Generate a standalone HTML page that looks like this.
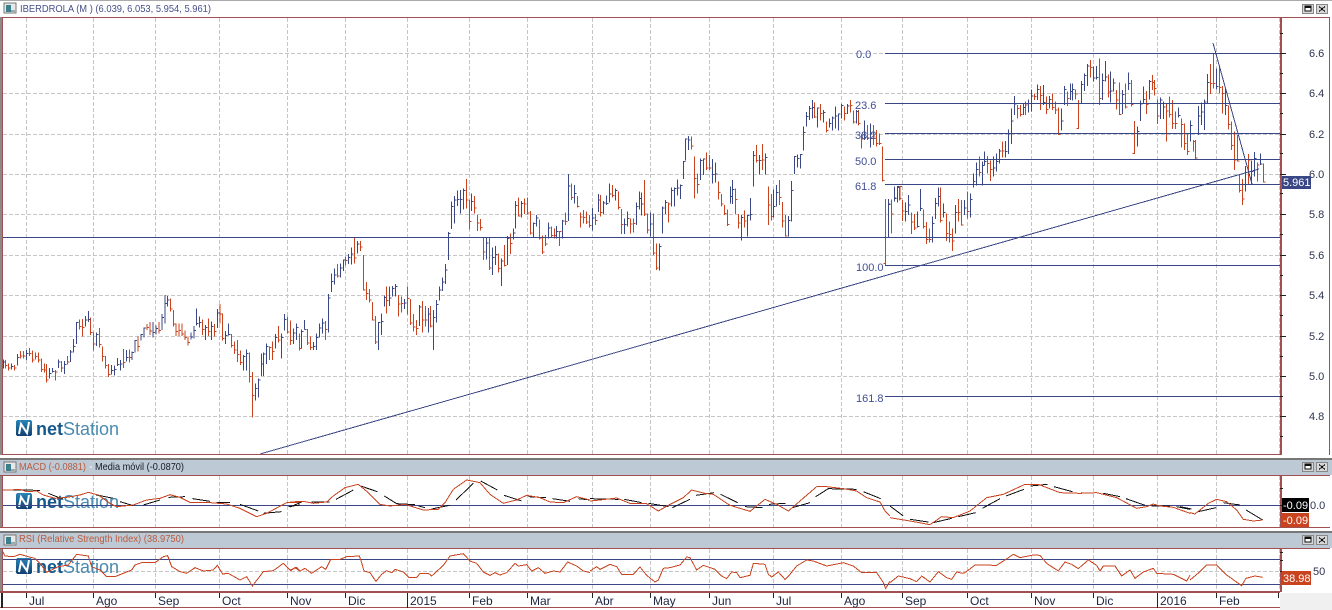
<!DOCTYPE html>
<html><head><meta charset="utf-8"><title>IBERDROLA</title>
<style>
html,body{margin:0;padding:0;background:#fff;width:1332px;height:610px;overflow:hidden}
svg{display:block;font-family:"Liberation Sans",Arial,sans-serif;shape-rendering:crispEdges}
.o{fill:none;stroke:#c8431e;stroke-width:3}
.b{fill:none;stroke:#3a4787;stroke-width:3}
.k{fill:none;stroke:#111;stroke-width:3}
.ax{font-size:11px;fill:#2c3350}
.fib{font-size:11px;fill:#414f96}
.dt{font-size:12px;fill:#1d2540}
.nl{font-size:18px;fill:#15598c;font-weight:bold}
.ns{font-size:18px;fill:#4a8ab0}
</style></head><body>
<svg width="1332" height="610" viewBox="0 0 1332 610" xmlns="http://www.w3.org/2000/svg">
<defs>
<linearGradient id="lg" x1="0" y1="0" x2="0" y2="1"><stop offset="0" stop-color="#2a86b8"/><stop offset="1" stop-color="#123f70"/></linearGradient>
<g id="wm"><rect x="16" y="0" width="16" height="16" rx="2" fill="url(#lg)"/><polyline points="19,14 21,4 27,13 29,2" fill="none" stroke="#fff" stroke-width="2" style="shape-rendering:auto"/><text class="nl" x="36" y="15">net</text><text class="ns" x="63" y="15">Station</text></g>
<g id="ic"><rect x="4" y="0" width="12" height="10" fill="#e8e8e8" stroke="#777"/><rect x="6" y="2" width="5" height="7" fill="#3c7f8c"/><rect x="11" y="7" width="4" height="2" fill="#9aa"/></g>
<g id="bt"><rect x="1302.5" y="0.5" width="11" height="9" fill="#d8d8d8" stroke="#888"/><rect x="1305" y="2" width="6" height="5" fill="#fff" stroke="#111"/><rect x="1305" y="2" width="6" height="2" fill="#111"/><rect x="1316.5" y="0.5" width="11" height="9" fill="#d8d8d8" stroke="#888"/><path d="M1319 2.5l6 5M1325 2.5l-6 5" stroke="#111" fill="none"/></g>
</defs>

<!-- frames -->
<rect width="1332" height="610" fill="#fff"/>
<rect x="0" y="0" width="1332" height="1" fill="#aaa"/>
<rect x="1280" y="593" width="52" height="17" fill="#f0f0f0"/>

<!-- grid -->
<g stroke="#c6c6c6" stroke-dasharray="4 2" fill="none">
<path d="M3 53.5H1279M3 93.5H1279M3 134.5H1279M3 174.5H1279M3 214.5H1279M3 255.5H1279M3 295.5H1279M3 336.5H1279M3 376.5H1279M3 416.5H1279M3 571.5H1279"/>
<path d="M26.5 18V454M93.5 18V454M155.5 18V454M219.5 18V454M287.5 18V454M345.5 18V454M407.5 18V454M469.5 18V454M527.5 18V454M592.5 18V454M650.5 18V454M709.5 18V454M773.5 18V454M841.5 18V454M902.5 18V454M967.5 18V454M1031.5 18V454M1093.5 18V454M1157.5 18V454M1216.5 18V454M1279.5 18V454"/>
<path d="M26.5 476V527M93.5 476V527M155.5 476V527M219.5 476V527M287.5 476V527M345.5 476V527M407.5 476V527M469.5 476V527M527.5 476V527M592.5 476V527M650.5 476V527M709.5 476V527M773.5 476V527M841.5 476V527M902.5 476V527M967.5 476V527M1031.5 476V527M1093.5 476V527M1157.5 476V527M1216.5 476V527M1279.5 476V527"/>
<path d="M26.5 549V591M93.5 549V591M155.5 549V591M219.5 549V591M287.5 549V591M345.5 549V591M407.5 549V591M469.5 549V591M527.5 549V591M592.5 549V591M650.5 549V591M709.5 549V591M773.5 549V591M841.5 549V591M902.5 549V591M967.5 549V591M1031.5 549V591M1093.5 549V591M1157.5 549V591M1216.5 549V591M1279.5 549V591"/>
</g>

<!-- watermarks -->
<use href="#wm" y="420"/>
<use href="#wm" y="493"/>
<use href="#wm" y="558"/>

<!-- price bars -->
<g transform="translate(0 300) scale(.33333)">
<path class="o" d="M16 180V205m0-8h6M25 190V212m0-8h6M43 195V212m0-8h6M61 153V176m0-8h6M70 153V176m0-8h6M88 144V168m0-8h6M97 152V188m0-8h6M106 158V178m0-8h6M115 158V188m0-8h6M124 176V216m0-8h6M133 190V218m0-8h6M140 192V248m0-8h6M167 210V242m0-26h6M185 183V216m0-12h6M203 168V194m0-8h6M239 58V88m0-8h6M248 57V110m0-28h6M272 52V105m0-8h6M281 98V152m0-20h6M299 84V142m0-8h6M308 140V185m0-16h6M317 168V205m0-8h6M326 192V231m0-8h6M371 147V204m0-16h6M389 148V188m0-16h6M414 110V155m0-16h6M441 72V90m0-8h6M450 66V105m0-12h6M477 66V100m0-8h6M511 -5V35m0-8h6M520 30V80m0-8h6M528 70V108m0-14h6M537 70V108m0-16h6M546 70V108m0-6h6M555 92V120m0-8h6M564 110V136m0-8h6M608 58V105m0-16h6M626 55V108m0-14h6M644 72V110m0-16h6M660 12V70m0-28h6M668 40V122m0-6h6M695 102V143m0-6h6M704 125V162m0-12h6M713 120V186m0-22h6M722 152V195m0-8h6M749 158V248m0-18h6M758 216V352m0-66h6M809 140V180m0-38h6M818 125V180m0-26h6M836 78V128m0-8h6M863 50V100m0-4h6M872 62V135m0-14h6M898 100V152m0-6h6"/>
<path class="b" d="M10 205V178m0 8h6M34 208V190m0 10h6M52 196V162m0 10h6M79 180V150m0 10h6M149 236V204m0 16h6M158 218V204m0 10h6M176 204V178m0 8h6M194 222V183m0 10h6M212 186V150m0 6h6M221 158V117m0 22h6M230 132V66m0 2h6M256 80V48m0 12h6M265 66V33m0 26h6M290 138V98m0 6h6M335 224V195m0 16h6M344 227V197m0 12h6M353 198V174m0 20h6M362 211V180m0 12h6M380 184V150m0 22h6M396 180V155m0 2h6M405 157V120m0 2h6M423 122V102m0 2h6M432 112V82m0 2h6M459 113V66m0 32h6M468 103V77m0 8h6M486 90V42m0 10h6M495 70V-15m0 25h6M503 20V-12m0 12h6M573 118V97m0 14h6M582 116V78m0 14h6M590 76V25m0 46h6M599 82V50m0 18h6M617 120V75m0 8h6M635 120V64m0 16h6M652 84V27m0 12h6M677 132V93m0 14h6M686 106V70m0 33h6M731 212V165m0 4h6M740 212V148m0 12h6M767 302V250m0 16h6M776 292V236m0 4h6M785 228V160m0 32h6M791 228V158m0 4h6M800 192V130m0 10h6M827 145V102m0 10h6M845 176V100m0 12h6M854 92V42m0 16h6M881 132V85m0 14h6M890 120V70m0 12h6"/>
</g>
<g transform="translate(300 170) scale(.33333)">
<path class="o" d="M22 477V525m0-6h6M31 500V540m0-8h6M76 453V510m0-32h6M112 282V322m0-4h6M137 260V286m0-14h6M163 203V280m0-16h6M181 213V243m0-12h6M190 255V362m0-2h6M199 336V390m0-20h6M208 357V398m0-8h6M217 396V452m0-2h6M226 438V522m0-6h6M259 350V430m0-38h6M295 375V440m0-38h6M304 380V427m0-26h6M322 350V434m0-48h6M331 387V465m0-6h6M340 432V485m0-14h6M349 450V495m0-20h6M367 393V488m0-38h6M376 408V470m0-20h6M391 408V472m0-4h6M499 27V115m0-25h6M508 90V178m0-24h6M524 78V130m0-16h6M533 135V183m0-24h6M542 147V182m0-10h6M551 203V270m0-24h6M569 203V300m0-6h6M596 250V308m0-12h6M614 225V290m0-4h6M632 190V252m0-32h6M656 82V140m0-2h6M674 85V132m0-30h6M683 82V133m0-4h6M692 123V193m0-4h6M719 148V208m0-4h6M728 197V252m0-6h6M737 195V228m0-6h6M755 170V203m0-6h6M764 175V205m0-8h6M779 183V228m0-44h6M797 127V165m0-10h6M815 40V90m0-8h6M833 78V113m0-4h6M842 127V173m0-32h6M851 120V160m0-18h6M860 125V162m0-6h6M869 135V173m0-6h6M887 132V165m0-14h6"/>
<path class="b" d="M4 536V478m0 6h6M13 478V450m0 28h6M40 540V516m0 14h6M49 540V490m0 12h6M58 503V460m0 14h6M67 490V445m0 14h6M85 488V372m0 12h6M94 366V310m0 24h6M103 343V295m0 20h6M121 323V280m0 14h6M130 303V268m0 2h6M145 282V252m0 10h6M154 283V232m0 20h6M172 250V213m0 9h6M235 540V456m0 2h6M244 495V430m0 24h6M253 410V376m0 6h6M268 408V350m0 34h6M277 380V348m0 7h6M286 380V342m0 8h6M313 417V387m0 12h6M358 468V405m0 6h6M385 488V414m0 18h6M400 540V420m0 22h6M409 457V390m0 14h6M418 392V350m0 10h6M427 363V322m0 14h6M436 342V282m0 18h6M445 270V186m0 4h6M454 177V95m0 14h6M463 160V78m0 12h6M472 108V62m0 26h6M481 130V60m0 28h6M490 118V55m0 6h6M515 123V70m0 24h6M560 268V203m0 16h6M578 315V232m0 30h6M587 285V228m0 26h6M605 348V265m0 8h6M623 285V198m0 8h6M641 208V175m0 14h6M647 175V93m0 14h6M665 143V93m0 7h6M701 202V158m0 3h6M710 170V135m0 9h6M746 205V158m0 16h6M770 205V168m0 16h6M788 205V150m0 3h6M806 153V12m0 36h6M824 100V45m0 25h6M878 182V114m0 30h6M896 126V72m0 18h6"/>
</g>
<g transform="translate(600 90) scale(.33333)">
<path class="o" d="M2 315V380m0-12h6M38 285V322m0-6h6M56 305V358m0-6h6M65 357V432m0-28h6M92 385V430m0-28h6M101 385V428m0-28h6M134 270V378m0-6h6M143 370V430m0-10h6M161 370V495m0-6h6M170 460V540m0-6h6M206 338V398m0-56h6M275 140V178m0-10h6M284 200V325m0-60h6M293 250V310m0-26h6M320 188V240m0-6h6M329 195V240m0-6h6M356 275V328m0-20h6M365 312V350m0-8h6M374 345V375m0-4h6M383 358V408m0-4h6M407 295V372m0-44h6M416 372V415m0-16h6M434 362V413m0-20h6M470 165V218m0-6h6M488 162V240m0-30h6M506 290V405m0-60h6M515 312V392m0-12h6M539 270V345m0-22h6M548 336V413m0-20h6M557 375V440m0-2h6M644 37V84m0-3h6M662 42V92m0-22h6M680 95V128m0-6h6M734 50V92m0-22h6M752 30V68m0-22h6M761 62V100m0-4h6M776 60V106m0-6h6M785 132V175m0-28h6M803 105V150m0-6h6M821 105V165m0-24h6M830 120V170m0-10h6M839 130V165m0-4h6M848 170V275m0-4h6M857 327V525m0-4h-6M875 328V430m0-58h6M899 290V332m0-6h6"/>
<path class="b" d="M11 372V333m0 6h6M20 345V316m0 24h6M29 337V280m0 32h6M47 332V295m0 6h6M74 432V385m0 18h6M83 410V365m0 20h6M110 405V338m0 12h6M119 358V305m0 20h6M125 377V308m0 34h6M152 440V368m0 34h6M179 542V460m0 10h6M188 430V350m0 4h6M197 372V330m0 8h6M215 350V292m0 10h6M224 350V292m0 4h6M233 317V268m0 26h6M242 327V283m0 4h6M251 267V213m0 2h6M257 212V145m0 2h6M266 180V138m0 12h6M302 270V205m0 6h6M311 255V205m0 2h6M338 280V207m0 46h6M347 278V218m0 34h6M392 340V290m0 30h6M398 342V270m0 28h6M425 452V375m0 8h6M443 440V375m0 2h6M452 392V324m0 50h6M461 290V183m0 14h6M479 253V195m0 16h6M497 253V190m0 12h6M521 382V298m0 52h6M530 350V285m0 22h6M566 440V378m0 14h6M575 395V273m0 28h6M584 252V198m0 2h6M593 232V193m0 12h6M602 235V192m0 2h6M611 182V110m0 18h6M620 110V66m0 14h6M629 90V48m0 8h6M638 85V30m0 22h6M653 112V52m0 2h6M671 97V60m0 8h6M689 113V85m0 16h6M698 122V80m0 4h6M707 115V50m0 28h6M716 122V70m0 2h6M725 85V42m0 4h6M743 72V42m0 6h6M770 100V60m0 4h6M794 150V92m0 50h6M812 172V100m0 32h6M866 440V327m0 16h6M884 333V290m0 36h6M893 332V290m0 2h6"/>
</g>
<g transform="translate(880 40) scale(.33333)">
<path class="o" d="M35 480V578m0-56h6M60 440V480m0-40h6M68 480V543m0-30h6M94 517V582m0-36h6M103 522V570m0-6h6M131 508V565m0-6h6M140 546V612m0-14h6M149 565V607m0-8h6M181 442V548m0-6h6M200 520V603m0-22h6M209 544V607m0-24h6M218 565V633m0-30h6M236 477V545m0-28h6M245 480V557m0-2h6M263 455V535m0-20h6M299 350V410m0-12h6M323 348V400m0-30h6M332 362V423m0-34h6M368 305V353m0-20h6M413 195V235m0-30h6M422 195V230m0-6h6M437 185V225m0-30h6M464 160V180m0-10h6M482 138V210m0-44h6M500 170V222m0-14h6M518 160V210m0-8h6M527 185V222m0-12h6M536 202V285m0-2h6M563 155V198m0-22h6M587 148V178m0-16h6M596 180V267m0-2h-6M632 60V112m0-30h6M659 55V195m0-20h6M686 103V172m0-16h6M710 150V208m0-28h6M719 128V225m0-2h6M737 130V205m0-4h6M755 120V200m0-6h6M764 243V342m0-2h-6M800 153V222m0-28h6M818 105V150m0-22h6M824 120V167m0-22h6M833 178V252m0-24h6M860 190V305m0-92h6M869 170V232m0-8h6M878 180V267m0-16h6M887 215V267m0-16h6"/>
<path class="b" d="M26 592V477m0 15h6M44 485V442m0 32h6M53 488V438m0 2h6M76 545V487m0 28h6M85 525V465m0 30h6M112 563V515m0 44h6M122 513V447m0 58h6M158 608V530m0 20h6M167 537V474m0 16h6M176 500V442m0 28h6M191 533V490m0 28h6M227 580V495m0 22h6M254 525V480m0 24h6M272 532V460m0 18h6M281 443V400m0 25h6M290 437V368m0 20h6M308 437V365m0 12h6M314 377V335m0 30h6M341 410V350m0 34h6M350 395V340m0 24h6M359 370V327m0 6h6M377 352V303m0 32h6M386 342V268m0 14h6M395 312V205m0 38h6M404 225V168m0 24h6M431 225V190m0 12h6M446 217V178m0 12h6M455 215V148m0 20h6M473 180V133m0 16h6M491 195V135m0 52h6M509 205V168m0 10h6M545 272V205m0 38h6M554 195V138m0 10h6M572 180V130m0 24h6M578 182V130m0 18h6M605 190V123m0 10h6M614 153V100m0 6h6M623 138V72m0 6h6M641 125V80m0 34h6M650 118V78m0 34h6M668 180V100m0 22h6M677 125V63m0 48h6M691 187V95m0 58h6M701 155V115m0 14h6M728 222V150m0 14h6M746 150V97m0 34h6M773 320V260m0 14h6M782 243V182m0 10h6M791 192V140m0 38h6M809 178V120m0 4h6M842 237V172m0 8h6M851 237V185m0 16h6M896 232V202m0 24h6"/>
</g>
<g transform="translate(1180 0) scale(.33333)">
<path class="o" d="M4 355V442m0-68h6M13 370V450m0-20h6M22 402V465m0-10h6M40 420V455m0-30h6M46 420V478m0-4h6M91 192V282m0-32h6M100 160V265m0-14h6M118 198V280m0-18h6M127 258V340m0-60h6M145 317V388m0-14h6M154 365V450m0-14h6M163 395V510m0-30h6M172 405V485m0-2h6M178 525V578m0-6h6M187 537V615m0-18h6M205 462V552m0-72h6M232 488V545m0-50h6M250 490V548m0-2h6"/>
<path class="b" d="M31 425V362m0 14h6M55 405V318m0 30h6M64 375V308m0 28h6M73 390V298m0 8h6M82 310V222m0 26h6M109 268V205m0 55h6M136 345V265m0 52h6M196 575V498m0 20h6M214 552V482m0 32h6M223 530V456m0 20h6M241 495V460m0 32h6"/>
</g>

<!-- overlays: horizontal lines & trend lines -->
<g stroke="#3a4787" fill="none">
<path d="M885 53.5H1280M885 103.5H1280M885 133.5H1280M885 159.5H1280M885 184.5H1280M3 237.5H1280M885 265.5H1280M885 396.5H1280"/>
<path d="M260 454L1259 169"/>
<path d="M1213 43L1252 184"/>
<path d="M3 505.5H1280M3 559.5H1280M3 584.5H1280"/>
</g>

<!-- MACD -->
<g transform="translate(0 410) scale(.33333)">
<path class="k" d="M8 240L30 240L120 241M145 250L190 268M290 255L340 265M360 275L400 287M430 285L480 270M505 262L555 260M578 266L630 274M650 277L690 277M720 283L775 303M790 310L845 305M865 290L900 285"/>
<polyline class="o" points="8,240 30,240 60,238 80,245 110,243 130,255 165,265 200,262 240,255 265,247 295,255 330,280 350,290 400,285 440,270 480,265 510,254 540,262 570,277 620,277 680,282 720,295 770,320 800,310 860,278 900,277"/>
<polyline class="o" points="8,425 15,438 40,440 60,433 85,440 105,445 120,460 140,487 175,470 205,465 230,433 265,438 275,470 300,480 320,500 345,500 370,490 395,480 405,465 425,458 465,458 490,440 503,437 515,470 540,485 560,490 585,473 610,483 640,480 652,466 668,492 685,490 720,510 740,500 757,528 790,485 820,482 850,460 870,480 890,472 900,483"/>
</g>
<g transform="translate(290 476) scale(.33333)">
<path class="k" d="M0 93L35 78M65 78L118 78M138 70L190 42M212 30L262 47M283 60L320 83L375 86M385 90L405 95M425 99L478 88M498 72L550 22M572 15L622 42M642 58L695 75M715 62L768 65M788 68L840 76M865 68L900 72"/>
<polyline class="o" points="0,78 40,76 70,82 110,78 130,60 165,35 205,25 235,50 270,85 300,90 345,85 400,102 445,100 465,80 490,40 530,12 570,20 600,55 640,82 680,72 710,58 750,65 780,78 820,80 860,62 900,72"/>
<polyline class="o" points="0,285 15,275 30,285 45,277 65,292 95,272 107,280 122,250 150,250 170,242 208,240 215,260 222,285 240,290 258,316 275,295 290,284 305,290 315,280 340,288 358,305 380,305 390,292 415,292 425,300 460,268 480,240 520,233 540,255 560,262 580,288 600,298 615,290 630,297 650,290 675,262 685,270 710,266 725,285 745,275 765,292 790,285 810,288 833,258 860,270 880,285 900,290"/>
</g>
<g transform="translate(590 476) scale(.33333)">
<path class="k" d="M0 68L85 70M103 70L155 80M175 82L235 92M247 95L300 70M318 58L372 50M392 55L443 80M465 92L517 95M537 85L587 82M607 95L660 80M677 62L715 38L800 40M820 47L872 68"/>
<polyline class="o" points="0,75 30,72 80,66 120,82 170,83 205,105 240,85 280,65 305,42 345,52 370,55 420,88 480,106 525,70 560,85 595,105 630,75 680,32 710,32 760,38 800,45 830,65 870,78 885,105 900,120"/>
<polyline class="o" points="0,285 20,272 30,280 60,265 80,272 95,295 130,295 150,273 170,298 195,318 205,312 220,277 240,275 270,267 290,243 300,245 320,282 340,268 375,280 395,300 410,308 425,288 440,290 450,305 480,298 490,262 525,265 535,295 545,303 565,288 585,310 600,295 620,270 650,252 670,255 710,270 760,260 790,270 815,290 860,290 880,320 887,338 900,315"/>
</g>
<g transform="translate(890 476) scale(.33333)">
<path class="k" d="M0 90L40 120M60 130L115 138M130 140L185 127M205 122L257 110M277 97L330 68M348 60L402 40M422 30L472 25M492 32L547 47M567 52L620 50M640 52L690 62M708 68L765 88M785 90L840 90M860 92L900 100"/>
<polyline class="o" points="0,125 60,135 120,146 155,122 190,125 240,105 290,65 340,55 405,25 445,25 510,50 570,52 620,50 680,65 740,97 770,92 790,84 810,90 850,94 900,112"/>
<polyline class="o" points="0,320 25,300 60,308 80,317 95,300 120,318 145,287 170,305 185,310 200,288 218,292 225,290 255,267 320,268 340,255 370,235 390,245 430,237 450,238 470,262 505,285 525,258 545,265 565,278 595,252 620,268 630,285 640,270 675,270 695,300 720,282 735,307 760,288 790,277 800,292 850,295 890,315 900,298"/>
</g>
<g transform="translate(1130 440) scale(.33333)">
<path class="k" d="M150 200L185 207M205 215L258 203M280 188L330 195M348 210L398 240"/>
<polyline class="o" points="180,218 195,222 235,190 260,178 290,185 320,210 340,238 370,243 398,240"/>
<polyline class="o" points="180,420 210,395 230,375 260,375 290,405 335,437 348,415 375,408 398,412"/>
</g>

<!-- panel borders -->
<rect x="0" y="17" width="2" height="438" fill="#8a8a8a"/>
<rect x="2" y="17" width="1" height="438" fill="#a05050"/>
<rect x="2" y="17" width="1328" height="1" fill="#a05050"/>
<rect x="2" y="454" width="1278" height="1" fill="#a05050"/>
<rect x="1280" y="17" width="2" height="438" fill="#a05050"/>
<rect x="1329" y="17" width="1" height="438" fill="#a05050"/>

<rect x="0" y="458" width="1332" height="2" fill="#777"/>
<rect x="0" y="460" width="1332" height="15" fill="#bdcad6"/>
<rect x="0" y="475" width="1330" height="1" fill="#a05050"/>
<rect x="0" y="476" width="2" height="52" fill="#8a8a8a"/>
<rect x="2" y="476" width="1" height="52" fill="#a05050"/>
<rect x="1280" y="476" width="2" height="52" fill="#a05050"/>
<rect x="0" y="527" width="1330" height="1" fill="#a05050"/>

<rect x="0" y="531" width="1332" height="2" fill="#777"/>
<rect x="0" y="533" width="1332" height="15" fill="#bdcad6"/>
<rect x="0" y="548" width="1330" height="1" fill="#a05050"/>
<rect x="0" y="549" width="2" height="43" fill="#8a8a8a"/>
<rect x="2" y="549" width="1" height="43" fill="#a05050"/>
<rect x="1280" y="549" width="2" height="43" fill="#a05050"/>
<rect x="0" y="591" width="1280" height="2" fill="#a05050"/>
<rect x="0" y="607" width="1280" height="1" fill="#a05050"/>
<rect x="1" y="593" width="2" height="15" fill="#222"/>

<!-- titles -->
<use href="#ic" y="3"/><use href="#ic" y="462"/><use href="#ic" y="535"/>
<text x="20" y="12" font-size="10.5" fill="#46508c" textLength="191" lengthAdjust="spacingAndGlyphs">IBERDROLA (M ) (6.039, 6.053, 5.954, 5.961)</text>
<text x="19" y="470" font-size="10.5" fill="#bb5a3c" textLength="67" lengthAdjust="spacingAndGlyphs">MACD (-0.0881)</text>
<text x="89" y="470" font-size="10.5" fill="#fff">-</text>
<text x="95" y="470" font-size="10.5" fill="#151a25" textLength="89" lengthAdjust="spacingAndGlyphs">Media móvil (-0.0870)</text>
<text x="19" y="542" font-size="10.5" fill="#bb5a3c" textLength="165" lengthAdjust="spacingAndGlyphs">RSI (Relative Strength Index) (38.9750)</text>
<use href="#bt" y="4"/><use href="#bt" y="462"/><use href="#bt" y="535"/>

<!-- right axis -->
<path stroke="#222" fill="none" d="M1280 53.5h6M1280 93.5h6M1280 134.5h6M1280 174.5h6M1280 214.5h6M1280 255.5h6M1280 295.5h6M1280 336.5h6M1280 376.5h6M1280 416.5h6M1280 33.5h3M1280 73.5h3M1280 113.5h3M1280 153.5h3M1280 193.5h3M1280 234.5h3M1280 275.5h3M1280 315.5h3M1280 356.5h3M1280 396.5h3M1280 436.5h3M1280 488.5h3M1280 505.5h3M1280 552.5h3M1280 560.5h3M1280 571.5h3"/>
<g class="ax">
<text class="ax" x="1309" y="57">6.6</text><text class="ax" x="1309" y="97">6.4</text><text class="ax" x="1309" y="138">6.2</text><text class="ax" x="1309" y="178">6.0</text><text class="ax" x="1309" y="218">5.8</text><text class="ax" x="1309" y="259">5.6</text><text class="ax" x="1309" y="299">5.4</text><text class="ax" x="1309" y="340">5.2</text><text class="ax" x="1309" y="380">5.0</text><text class="ax" x="1309" y="420">4.8</text>
<text class="ax" x="1310" y="509">0.0</text><text class="ax" x="1313" y="575">50</text>
</g>
<rect x="1282" y="176" width="29" height="13" fill="#3a4787"/><text x="1283" y="186" font-size="11" fill="#fff">5.961</text>
<rect x="1282" y="498" width="27" height="14" fill="#000"/><text x="1283" y="509" font-size="11" fill="#fff">-0.09</text>
<rect x="1282" y="513" width="27" height="14" fill="#c8431e"/><text x="1283" y="524" font-size="11" fill="#fff">-0.09</text>
<rect x="1282" y="571" width="29" height="14" fill="#c8431e"/><text x="1283" y="582" font-size="11" fill="#fff">38.98</text>

<!-- fib labels -->
<text class="fib" x="856" y="58">0.0</text><text class="fib" x="855" y="109">23.6</text><text class="fib" x="855" y="139">38.2</text><text class="fib" x="855" y="165">50.0</text><text class="fib" x="855" y="190">61.8</text><text class="fib" x="856" y="271">100.0</text><text class="fib" x="856" y="402">161.8</text>

<!-- date axis -->
<path stroke="#222" fill="none" d="M26.5 593v5M93.5 593v5M155.5 593v5M219.5 593v5M287.5 593v5M345.5 593v5M407.5 593v15M469.5 593v5M527.5 593v5M592.5 593v5M650.5 593v5M709.5 593v5M773.5 593v5M841.5 593v5M902.5 593v5M967.5 593v5M1031.5 593v5M1093.5 593v5M1157.5 593v15M1216.5 593v5M1278.5 593v5"/>
<text class="dt" x="29" y="605">Jul</text><text class="dt" x="96" y="605">Ago</text><text class="dt" x="158" y="605">Sep</text><text class="dt" x="222" y="605">Oct</text><text class="dt" x="290" y="605">Nov</text><text class="dt" x="348" y="605">Dic</text><text class="dt" x="410" y="605">2015</text><text class="dt" x="472" y="605">Feb</text><text class="dt" x="530" y="605">Mar</text><text class="dt" x="595" y="605">Abr</text><text class="dt" x="653" y="605">May</text><text class="dt" x="712" y="605">Jun</text><text class="dt" x="776" y="605">Jul</text><text class="dt" x="844" y="605">Ago</text><text class="dt" x="905" y="605">Sep</text><text class="dt" x="970" y="605">Oct</text><text class="dt" x="1034" y="605">Nov</text><text class="dt" x="1096" y="605">Dic</text><text class="dt" x="1160" y="605">2016</text><text class="dt" x="1219" y="605">Feb</text>
</svg>
</body></html>
